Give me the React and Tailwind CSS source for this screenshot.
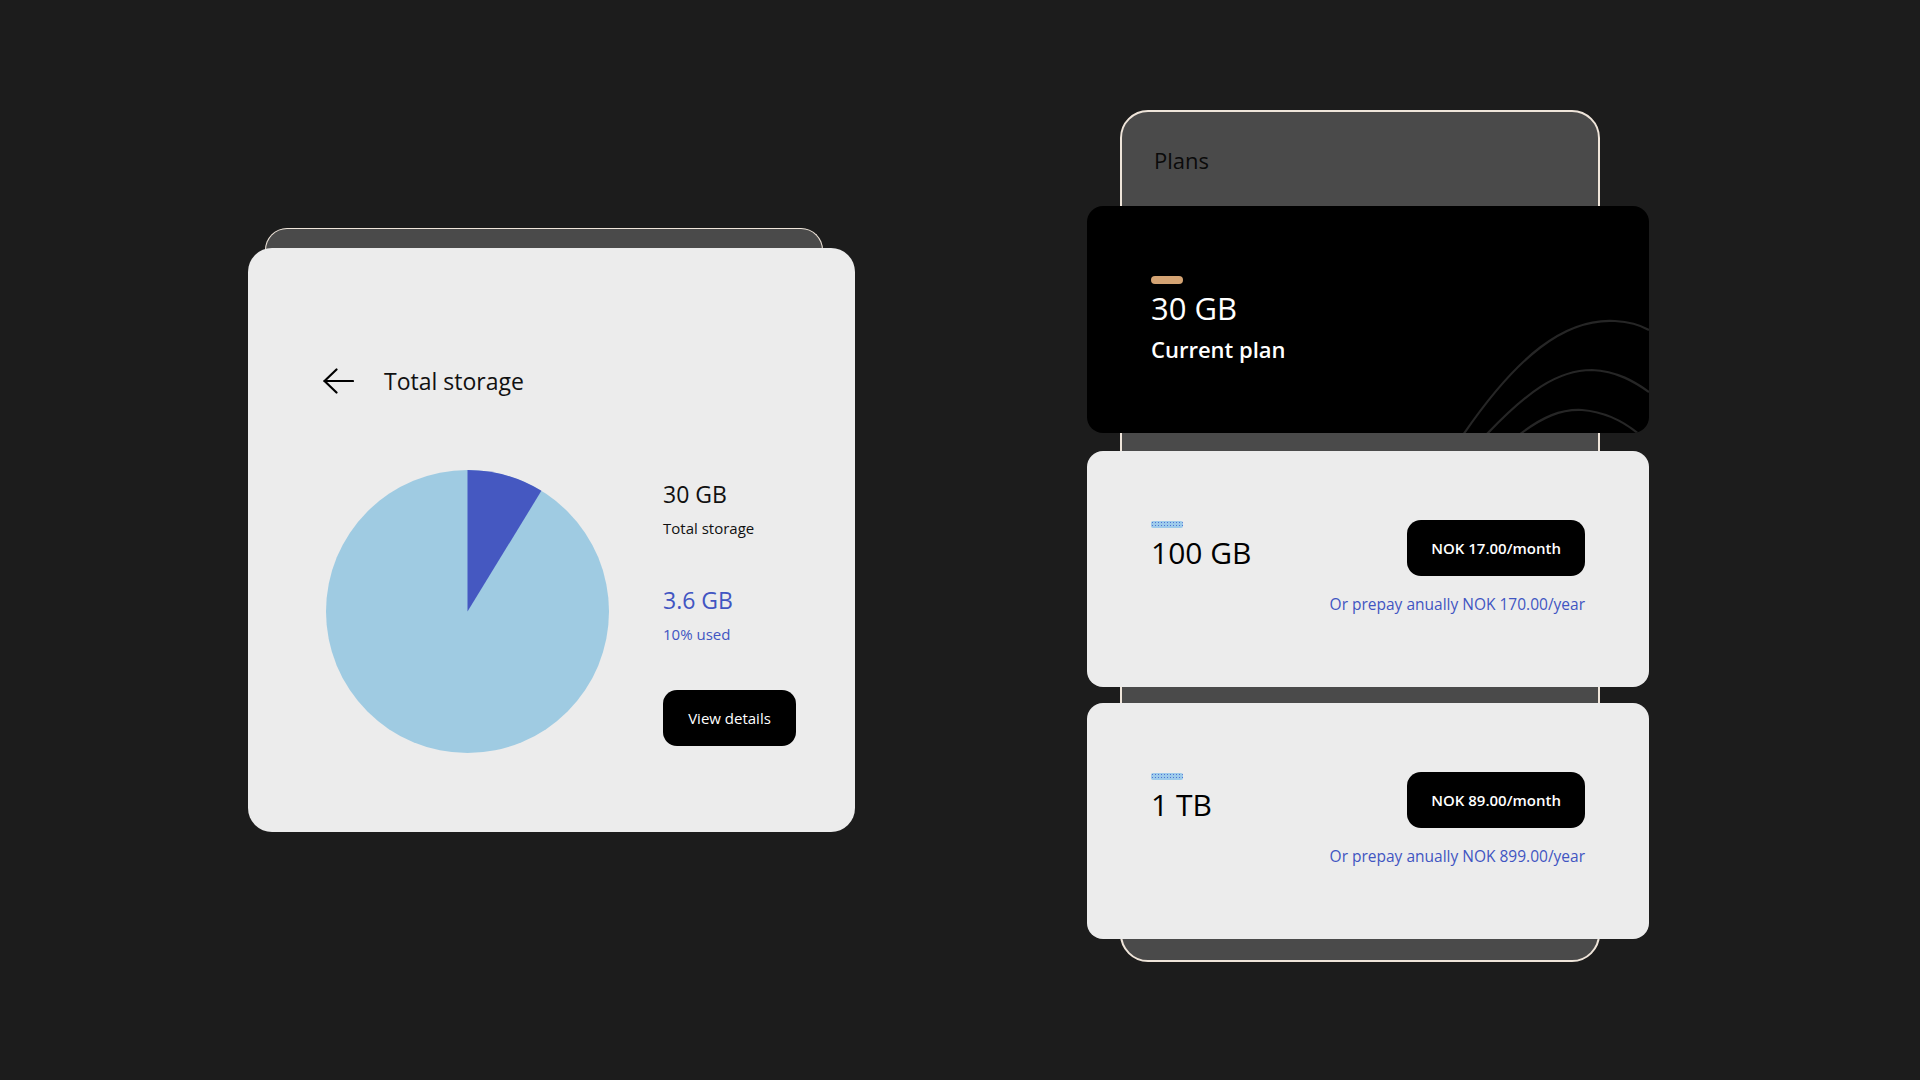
function BackArrow() {
  return (
    <svg width="31" height="26" viewBox="0 0 31 26" fill="none" stroke="#000" strokeWidth="2.2" strokeLinecap="round" strokeLinejoin="round">
      <path d="M1.5 13H30" />
      <path d="M13.5 1.5L1.5 13L13.5 24.5" />
    </svg>
  );
}

function Pie() {
  return (
    <svg width="283" height="283" viewBox="0 0 283 283">
      <circle cx="141.5" cy="141.5" r="141.5" fill="#9fcbe2" />
      <path d="M141.5 141.5L141.5 0A141.5 141.5 0 0 1 215.4 20.85Z" fill="#4558c1" />
    </svg>
  );
}

function Waves() {
  return (
    <svg className="absolute inset-0" width="562" height="227" viewBox="0 0 562 227" fill="none" stroke="#262626" strokeWidth="2.2">
      <path d="M376 229C430 150 478 112 528 115C545 116 555 120 562 124" />
      <path d="M399 229C440 186 470 164 505 164C530 165 548 176 562 186" />
      <path d="M432 229C455 211 474 203 495 204C520 206 540 218 553 229" />
    </svg>
  );
}

function DotBar() {
  return (
    <div className="h-[7px] w-[32px] rounded-[2px] bg-[#9ecbeb] bg-[radial-gradient(circle,#4f74d4_0.7px,transparent_1px)] bg-[length:3px_3px]" />
  );
}

function PlanCard({ size, price, yearly, className }) {
  return (
    <div className={"-ml-[35px] w-[562px] h-[236px] rounded-[16px] bg-[#ececec] flex justify-between pl-[64px] pr-[64px] " + className}>
      <div className="pt-[70px] flex flex-col">
        <DotBar />
        <div className="mt-[10px] text-[30px] leading-none text-black">{size}</div>
      </div>
      <div className="pt-[69px] flex flex-col items-end">
        <button className="h-[56px] px-[24px] rounded-[14px] bg-black text-white text-[15px] font-semibold">
          {price}
        </button>
        <div className="mt-[21px] text-[15.5px] leading-none text-[#4155c2]">{yearly}</div>
      </div>
    </div>
  );
}

export default function App() {
  return (
    <div className="min-h-screen w-full bg-[#1c1c1c] flex items-start font-['Open_Sans',sans-serif]">
      {/* storage card */}
      <div className="ml-[248px] mt-[228px] w-[607px] flex flex-col">
        <div className="ml-[17px] mr-[32px] h-[30px] -mb-[10px] rounded-t-[22px] border-[1.5px] border-b-0 border-[#efe5da] bg-[#4a4a4a]" />
        <div className="relative h-[584px] rounded-[24px] bg-[#ececec] pl-[75px] pt-[118px]">
          <div className="h-[30px] flex items-center">
            <BackArrow />
            <span className="ml-[30px] text-[23px] text-[#111]">Total storage</span>
          </div>
          <div className="mt-[74px] flex items-start">
            <div className="ml-[3px]">
              <Pie />
            </div>
            <div className="ml-[54px] pt-[13px] flex flex-col items-start">
              <div className="text-[23px] leading-none text-[#111]">30 GB</div>
              <div className="mt-[15px] text-[15px] leading-none text-[#111]">Total storage</div>
              <div className="mt-[53px] text-[23px] leading-none text-[#4155c2]">3.6 GB</div>
              <div className="mt-[15px] text-[15px] leading-none text-[#4155c2]">10% used</div>
              <button className="mt-[48px] w-[133px] h-[56px] rounded-[14px] bg-black text-white text-[15px]">
                View details
              </button>
            </div>
          </div>
        </div>
      </div>

      {/* plans */}
      <div className="ml-[265px] mt-[110px] w-[480px] rounded-[28px] border-2 border-[#efe5da] bg-[#4a4a4a] pt-[37px] pb-[21px] flex flex-col">
        <div className="ml-[32px] text-[22px] leading-none text-[#0a0a0a]">Plans</div>
        <div className="relative mt-[35px] -ml-[35px] w-[562px] h-[227px] rounded-[16px] bg-black overflow-hidden pl-[64px] pt-[70px]">
          <Waves />
          <div className="relative flex flex-col">
            <div className="h-[8px] w-[32px] rounded-full bg-[#d4a373]" />
            <div className="mt-[9px] text-[31px] leading-none text-white">30 GB</div>
            <div className="mt-[14px] text-[22px] leading-none font-semibold text-white">Current plan</div>
          </div>
        </div>
        <PlanCard className="mt-[18px]" size="100 GB" price="NOK 17.00/month" yearly="Or prepay anually NOK 170.00/year" />
        <PlanCard className="mt-[16px]" size="1 TB" price="NOK 89.00/month" yearly="Or prepay anually NOK 899.00/year" />
      </div>
    </div>
  );
}
